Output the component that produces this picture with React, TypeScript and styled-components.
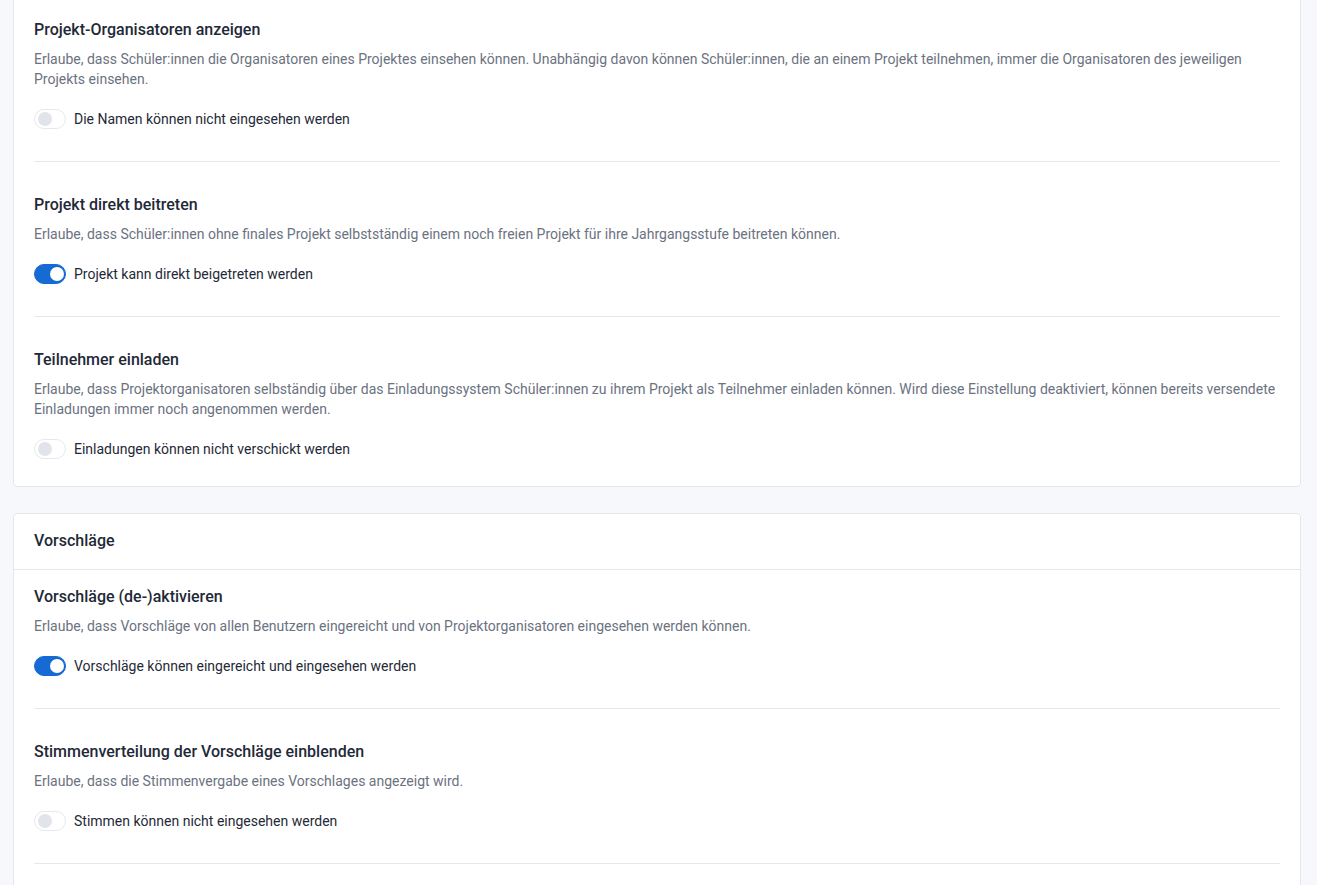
import React, { useState } from 'react';
import styled, { createGlobalStyle } from 'styled-components';

const GlobalStyle = createGlobalStyle`
  html, body {
    margin: 0;
    padding: 0;
    background: #f7f8fb;
    font-family: Roboto, "Liberation Sans", Arial, sans-serif;
    -webkit-font-smoothing: antialiased;
  }
  * { box-sizing: border-box; }
`;

const Page = styled.div`
  display: flex;
  flex-direction: column;
  gap: 26px;
  padding: 0 16px 40px 13px;
  margin-top: -14px;
`;

const Card = styled.section<{ $continues?: boolean }>`
  background: #fff;
  border: 1px solid #e5e7eb;
  border-radius: 4px;
  padding: 0 20px ${({ $continues }) => ($continues ? '48px' : '0')};
`;

const CardHeader = styled.div`
  margin: 0 -20px;
  padding: 15px 20px 16px;
  border-bottom: 1px solid #e5e7eb;
  font-size: 16px;
  line-height: 24px;
  font-weight: 500;
  color: #1f2937;
`;

const Item = styled.div<{ $last?: boolean }>`
  padding: 31px 0 ${({ $last }) => ($last ? '27px' : '32px')};
  border-bottom: ${({ $last }) => ($last ? 'none' : '1px solid #e5e7eb')};

  ${CardHeader} + & {
    padding-top: 15px;
  }
`;

const Title = styled.h3`
  margin: 0;
  font-size: 16px;
  line-height: 24px;
  font-weight: 500;
  color: #1f2937;
`;

const Description = styled.p`
  margin: 7px 0 0;
  font-size: 14px;
  line-height: 20px;
  color: #6b7280;
`;

const ToggleRow = styled.label`
  display: flex;
  align-items: center;
  gap: 8px;
  margin-top: 20px;
  height: 20px;
  font-size: 14px;
  color: #1f2937;
  cursor: pointer;
`;

const Track = styled.button<{ $on: boolean }>`
  position: relative;
  flex: none;
  width: 32px;
  height: 20px;
  padding: 0;
  border-radius: 10px;
  border: 1px solid ${({ $on }) => ($on ? '#166ad4' : '#e6e8ec')};
  background: ${({ $on }) => ($on ? '#166ad4' : '#fff')};
  cursor: pointer;
`;

const Knob = styled.span<{ $on: boolean }>`
  position: absolute;
  top: 2px;
  left: ${({ $on }) => ($on ? '15px' : '3px')};
  width: 14px;
  height: 14px;
  border-radius: 50%;
  background: ${({ $on }) => ($on ? '#fff' : '#e1e4ea')};
  transition: left 0.15s;
`;

type Setting = {
  title: string;
  description: string;
  on: string;
  off: string;
  value: boolean;
};

const projectSettings: Setting[] = [
  {
    title: 'Projekt-Organisatoren anzeigen',
    description:
      'Erlaube, dass Schüler:innen die Organisatoren eines Projektes einsehen können. Unabhängig davon können Schüler:innen, die an einem Projekt teilnehmen, immer die Organisatoren des jeweiligen Projekts einsehen.',
    on: 'Die Namen können eingesehen werden',
    off: 'Die Namen können nicht eingesehen werden',
    value: false,
  },
  {
    title: 'Projekt direkt beitreten',
    description:
      'Erlaube, dass Schüler:innen ohne finales Projekt selbstständig einem noch freien Projekt für ihre Jahrgangsstufe beitreten können.',
    on: 'Projekt kann direkt beigetreten werden',
    off: 'Projekt kann nicht direkt beigetreten werden',
    value: true,
  },
  {
    title: 'Teilnehmer einladen',
    description:
      'Erlaube, dass Projektorganisatoren selbständig über das Einladungssystem Schüler:innen zu ihrem Projekt als Teilnehmer einladen können. Wird diese Einstellung deaktiviert, können bereits versendete Einladungen immer noch angenommen werden.',
    on: 'Einladungen können verschickt werden',
    off: 'Einladungen können nicht verschickt werden',
    value: false,
  },
];

const suggestionSettings: Setting[] = [
  {
    title: 'Vorschläge (de-)aktivieren',
    description:
      'Erlaube, dass Vorschläge von allen Benutzern eingereicht und von Projektorganisatoren eingesehen werden können.',
    on: 'Vorschläge können eingereicht und eingesehen werden',
    off: 'Vorschläge können nicht eingereicht werden',
    value: true,
  },
  {
    title: 'Stimmenverteilung der Vorschläge einblenden',
    description: 'Erlaube, dass die Stimmenvergabe eines Vorschlages angezeigt wird.',
    on: 'Stimmen können eingesehen werden',
    off: 'Stimmen können nicht eingesehen werden',
    value: false,
  },
];

const SettingItem = ({ setting, last }: { setting: Setting; last?: boolean }) => {
  const [on, setOn] = useState(setting.value);
  return (
    <Item $last={last}>
      <Title>{setting.title}</Title>
      <Description>{setting.description}</Description>
      <ToggleRow>
        <Track type="button" role="switch" aria-checked={on} $on={on} onClick={() => setOn(!on)}>
          <Knob $on={on} />
        </Track>
        {on ? setting.on : setting.off}
      </ToggleRow>
    </Item>
  );
};

export default function App() {
  return (
    <>
      <GlobalStyle />
      <Page>
        <Card>
          {projectSettings.map((s, i) => (
            <SettingItem key={s.title} setting={s} last={i === projectSettings.length - 1} />
          ))}
        </Card>
        <Card $continues>
          <CardHeader>Vorschläge</CardHeader>
          {suggestionSettings.map((s) => (
            <SettingItem key={s.title} setting={s} />
          ))}
        </Card>
      </Page>
    </>
  );
}
